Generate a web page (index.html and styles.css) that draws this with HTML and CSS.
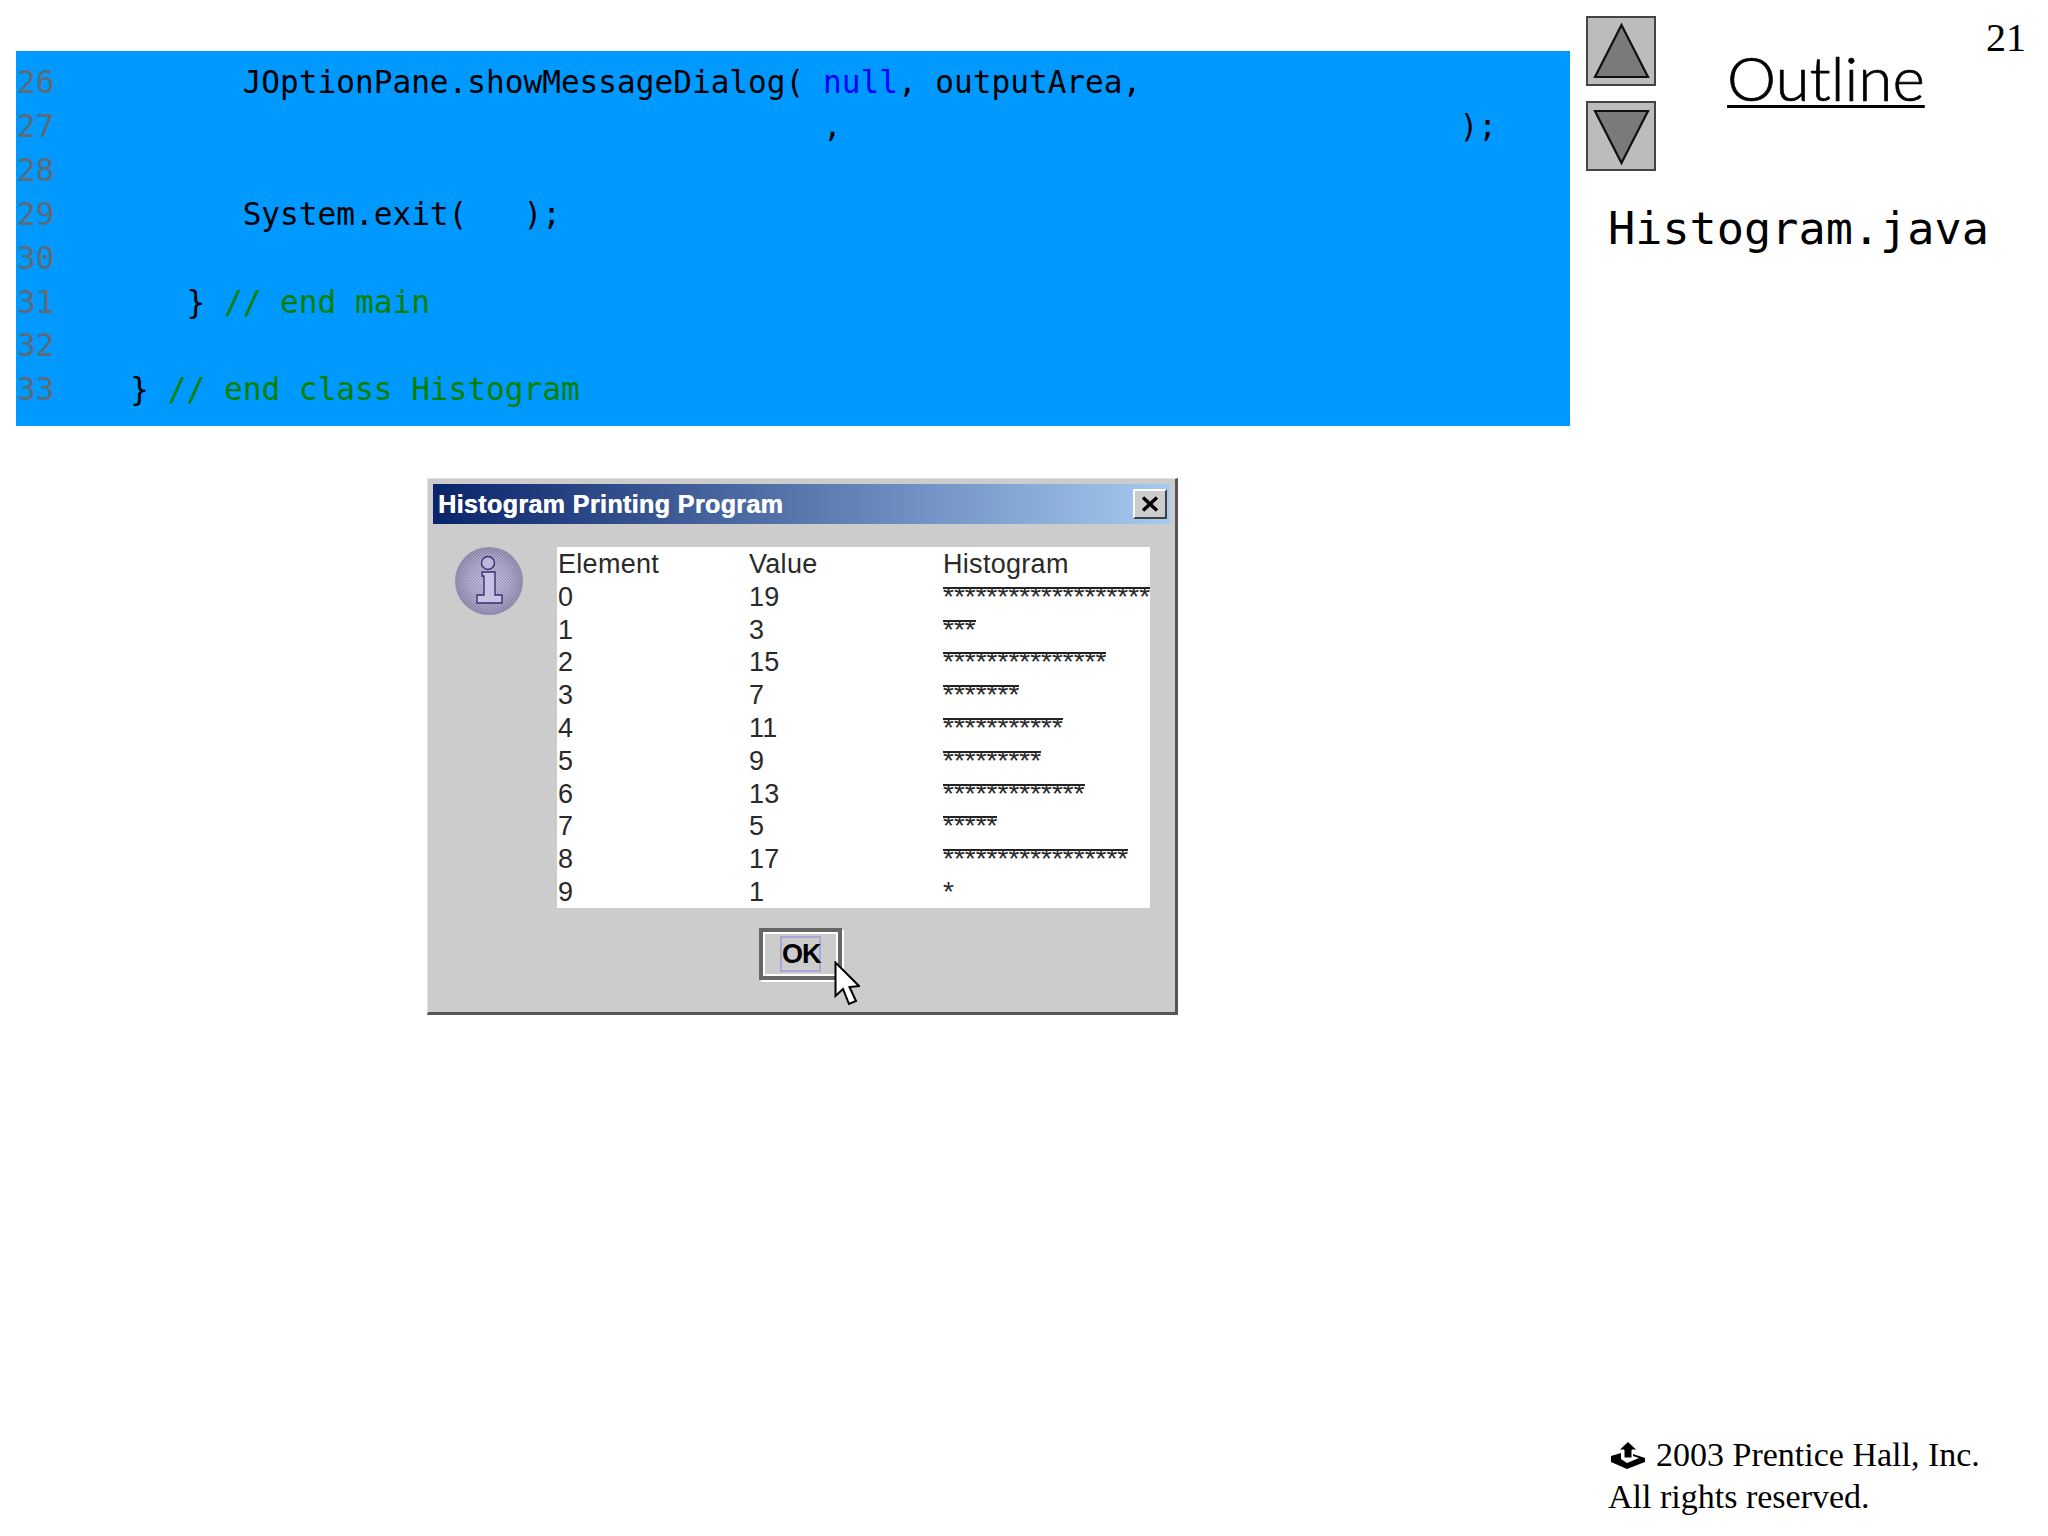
FILE: index.html
```html
<!DOCTYPE html>
<html lang="en">
<head>
<meta charset="utf-8">
<title>Histogram.java</title>
<link rel="stylesheet" href="styles.css">
</head>
<body>
<div class="page">
  <main class="content">
    <pre class="code"><span class="ln">26</span>          JOptionPane.showMessageDialog( <span class="kw">null</span>, outputArea,
<span class="ln">27</span>                                         ,                                 );
<span class="ln">28</span>
<span class="ln">29</span>          System.exit(   );
<span class="ln">30</span>
<span class="ln">31</span>       } <span class="cm">// end main</span>
<span class="ln">32</span>
<span class="ln">33</span>    } <span class="cm">// end class Histogram</span></pre>

    <section class="dialog">
      <header class="titlebar">
        <span class="title">Histogram Printing Program</span>
        <span class="close">
          <svg class="close-x" viewBox="0 0 20 16"><path d="M3 1.5 L17 14.5 M17 1.5 L3 14.5"/></svg>
        </span>
      </header>
      <div class="dialog-body">
        <svg class="info" viewBox="0 0 68 68">
          <defs>
            <radialGradient id="disc" cx="50%" cy="50%" r="50%">
              <stop offset="0" stop-color="#d2cdea"/>
              <stop offset="0.6" stop-color="#bcb6da"/>
              <stop offset="1" stop-color="#9c98b8"/>
            </radialGradient>
            <pattern id="dots" width="3" height="3" patternUnits="userSpaceOnUse">
              <rect width="1.5" height="1.5" fill="#5e5a80" fill-opacity="0.45"/>
              <rect x="1.5" y="1.5" width="1.5" height="1.5" fill="#5e5a80" fill-opacity="0.45"/>
            </pattern>
          </defs>
          <circle cx="34" cy="34" r="34" fill="url(#disc)"/>
          <circle cx="34" cy="34" r="34" fill="url(#dots)"/>
          <circle cx="33" cy="16" r="6.5" fill="#bdb7dc" stroke="#3c2f70" stroke-width="1.4"/>
          <path d="M27 25 H40 V48 H47 V56 H22 V48 H29 V29 H27 Z" fill="#c8c2e4" stroke="#3c2f70" stroke-width="1.4"/>
        </svg>
        <div class="table">
          <div class="row"><span>Element</span><span>Value</span><span>Histogram</span></div>
          <div class="row"><span>0</span><span>19</span><span class="stars">*******************</span></div>
          <div class="row"><span>1</span><span>3</span><span class="stars">***</span></div>
          <div class="row"><span>2</span><span>15</span><span class="stars">***************</span></div>
          <div class="row"><span>3</span><span>7</span><span class="stars">*******</span></div>
          <div class="row"><span>4</span><span>11</span><span class="stars">***********</span></div>
          <div class="row"><span>5</span><span>9</span><span class="stars">*********</span></div>
          <div class="row"><span>6</span><span>13</span><span class="stars">*************</span></div>
          <div class="row"><span>7</span><span>5</span><span class="stars">*****</span></div>
          <div class="row"><span>8</span><span>17</span><span class="stars">*****************</span></div>
          <div class="row"><span>9</span><span>1</span><span class="stars single">*</span></div>
        </div>
      </div>
      <div class="actions">
        <button class="ok" type="button"><span class="ok-focus">OK</span></button>
        <svg class="cursor" viewBox="0 0 26 46"><path d="M1.5 1.5 V35 L9 28 L15 43 L22 40 L15.5 26 L25 25 Z" fill="#fff" stroke="#000" stroke-width="2" stroke-linejoin="miter"/></svg>
      </div>
    </section>
  </main>

  <aside class="sidebar">
    <div class="side-top">
      <nav class="nav">
        <span class="nav-btn">
          <svg viewBox="0 0 66 66"><path d="M33.5 7 L60 59 H7 Z"/></svg>
        </span>
        <span class="nav-btn">
          <svg viewBox="0 0 66 66"><path d="M33.5 60 L60 8 H7 Z"/></svg>
        </span>
      </nav>
      <h1 class="outline">Outline</h1>
      <span class="pageno">21</span>
    </div>
    <p class="filename">Histogram.java</p>
    <footer class="copyright">
      <div class="copy-line">
        <svg class="ph-logo" viewBox="0 0 36 28"><path d="M18 0.5 L27 9 H22 V17 H14 V9 H9 Z" fill="#000" stroke="#fff" stroke-width="1"/><path d="M1 15 L11 12 V18 H23 V13 L35 17 V21 L17 28 L1 21 Z" fill="#000"/><path d="M11 18 L17 22 L29 17 L23 15 V18 Z" fill="#fff"/></svg>
        <span>2003 Prentice Hall, Inc.</span>
      </div>
      <div class="copy-line">All rights reserved.</div>
    </footer>
  </aside>
</div>
</body>
</html>
```

FILE: styles.css
```css
html, body {
  margin: 0;
  padding: 0;
  background: #fff;
}

.page {
  display: flex;
  width: 2048px;
  height: 1536px;
  overflow: hidden;
}

.content {
  flex: 0 0 1570px;
  box-sizing: border-box;
  padding: 51px 0 0 16px;
}

.code {
  margin: 0;
  box-sizing: border-box;
  height: 375px;
  padding: 10px 0 0 1px;
  background: #0099ff;
  color: #000;
  font-family: "DejaVu Sans Mono", monospace;
  font-size: 31.1px;
  line-height: 43.9px;
}

.code .ln { margin-right: 1px; color: #5f6a75; }
.kw { color: #0000ff; }
.cm { color: #008000; }

.dialog {
  box-sizing: border-box;
  width: 751px;
  height: 537px;
  margin: 52px 0 0 411px;
  padding: 5px;
  background: #ccc;
  border-top: 1px solid #e4e4dc;
  border-left: 1px solid #e4e4dc;
  border-right: 3px solid #555;
  border-bottom: 3px solid #555;
}

.titlebar {
  display: flex;
  align-items: center;
  justify-content: space-between;
  height: 40px;
  padding: 0 3px 0 5px;
  background: linear-gradient(90deg, #0a246a, #a6caf0);
}

.title {
  color: #fff;
  font-family: "Liberation Sans", sans-serif;
  font-weight: 700;
  font-size: 25px;
  letter-spacing: 0.4px;
  text-shadow: 0.5px 0 0 #fff;
}

.close {
  display: flex;
  align-items: center;
  justify-content: center;
  box-sizing: border-box;
  width: 34px;
  height: 30px;
  background: #ccc;
  border: 2px solid;
  border-color: #fff #404040 #404040 #fff;
}

.close-x {
  width: 20px;
  height: 16px;
  fill: none;
  stroke: #000;
  stroke-width: 3.4;
}

.dialog-body {
  display: flex;
  margin-top: 23px;
  padding-left: 22px;
}

.info {
  flex: 0 0 68px;
  width: 68px;
  height: 68px;
  margin-right: 34px;
}

.table {
  box-sizing: border-box;
  width: 593px;
  height: 361px;
  padding-top: 2px;
  background: #fff;
  overflow: hidden;
  font-family: "Liberation Sans", sans-serif;
  font-size: 27px;
  letter-spacing: 0.3px;
  color: #2a2a2a;
}

.row {
  display: grid;
  grid-template-columns: 191px 194px 1fr;
  height: 32.8px;
  line-height: 31px;
  padding-left: 1px;
}

.stars {
  position: relative;
  top: -1px;
  justify-self: start;
  font-size: 28px;
  letter-spacing: 0;
  white-space: nowrap;
  background: linear-gradient(#222, #222) no-repeat 0 6px / 100% 2px;
}

.stars.single { background: none; }

.actions {
  position: relative;
  display: flex;
  margin-top: 20px;
  padding-left: 326px;
}

.ok {
  box-sizing: border-box;
  display: flex;
  align-items: center;
  justify-content: center;
  width: 83px;
  height: 52px;
  padding: 0;
  background: #ccc;
  border: 4px solid #666;
  outline: 2px solid #fff;
  outline-offset: -6px;
  box-shadow: 2px 2px 0 #fff;
}

.ok-focus {
  box-sizing: border-box;
  width: 41px;
  height: 36px;
  line-height: 33px;
  border: 2px solid #aaa6d8;
  font-family: "Liberation Sans", sans-serif;
  font-weight: 700;
  font-size: 27px;
  letter-spacing: -1px;
  color: #000;
  text-align: center;
}

.cursor {
  position: absolute;
  left: 401px;
  top: 33px;
  width: 26px;
  height: 46px;
}

.sidebar {
  flex: 1;
  display: flex;
  flex-direction: column;
  box-sizing: border-box;
  padding: 16px 0 18px 16px;
}

.side-top {
  display: flex;
  align-items: flex-start;
}

.nav {
  display: flex;
  flex-direction: column;
  gap: 15px;
}

.nav-btn {
  box-sizing: border-box;
  display: block;
  width: 70px;
  height: 70px;
  background: #bcbcbc;
  border: 2px solid #444;
}

.nav-btn svg {
  display: block;
  width: 66px;
  height: 66px;
  fill: #7a7a7a;
  stroke: #111;
  stroke-width: 2.2;
}

.outline {
  margin: 28px 0 0 71px;
  font-family: Lato, sans-serif;
  font-weight: 300;
  font-size: 62px;
  line-height: 66px;
  -webkit-text-stroke: 0.7px #000;
  text-decoration: underline;
  text-decoration-thickness: 3px;
  text-underline-offset: 4px;
  color: #000;
}

.pageno {
  margin: -1px 0 0 auto;
  padding-right: 22px;
  font-family: "Liberation Serif", serif;
  font-size: 40px;
  line-height: 46px;
  color: #000;
}

.filename {
  margin: 28px 0 0 22px;
  font-family: "DejaVu Sans Mono", monospace;
  font-size: 45.2px;
  line-height: 60px;
  color: #000;
}

.copyright {
  margin-top: auto;
  padding-left: 22px;
  font-family: "Liberation Serif", serif;
  font-size: 34px;
  line-height: 42px;
  color: #000;
}

.copy-line {
  display: flex;
  align-items: center;
  height: 42px;
}

.ph-logo {
  width: 36px;
  height: 28px;
  margin: 0 10px 0 2px;
}
```
